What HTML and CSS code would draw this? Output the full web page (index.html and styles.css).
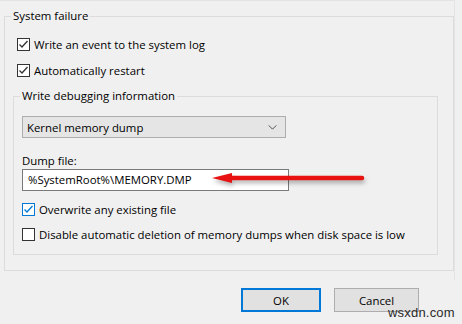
FILE: index.html
```html
<!DOCTYPE html>
<html>
<head>
<meta charset="utf-8">
<link rel="stylesheet" href="styles.css">
</head>
<body>
<div class="page">
  <div class="panel">
    <fieldset class="group outer">
      <legend>System failure</legend>
      <div class="check indent">
        <span class="box"><svg viewBox="0 0 13 13"><polyline points="2.5,6.5 5,9 10.5,3"/></svg></span>
        <span>Write an event to the system log</span>
      </div>
      <div class="check indent gap">
        <span class="box"><svg viewBox="0 0 13 13"><polyline points="2.5,6.5 5,9 10.5,3"/></svg></span>
        <span>Automatically restart</span>
      </div>
      <fieldset class="group inner">
        <legend>Write debugging information</legend>
        <div class="select">
          <span>Kernel memory dump</span>
          <svg class="chev" viewBox="0 0 10 6"><polyline points="0.5,0.5 5,5 9.5,0.5"/></svg>
        </div>
        <div class="field-label">Dump file:</div>
        <div class="textbox">%SystemRoot%\MEMORY.DMP</div>
        <div class="check row3">
          <span class="box blue"><svg viewBox="0 0 13 13"><polyline points="2.5,6.5 5,9 10.5,3"/></svg></span>
          <span>Overwrite any existing file</span>
        </div>
        <div class="check row4">
          <span class="box"></span>
          <span>Disable automatic deletion of memory dumps when disk space is low</span>
        </div>
      </fieldset>
    </fieldset>
  </div>
  <div class="buttons">
    <button class="btn default">OK</button>
    <button class="btn cancel">Cancel</button>
  </div>
  <svg class="arrow" viewBox="0 0 165 26" width="165" height="26">
    <line x1="24" y1="13" x2="157" y2="13"/>
    <polygon points="7,13 27,8 27,18"/>
  </svg>
  <div class="watermark">wsxdn.com</div>
</div>
</body>
</html>
```
FILE: styles.css
```css
html, body {
  margin: 0;
  padding: 0;
  background: #f0f0f0;
}
body {
  font-family: "Open Sans", "Noto Sans", sans-serif;
  font-size: 11.4px;
  color: #000;
  width: 462px;
  height: 324px;
  overflow: hidden;
}
.page {
  position: relative;
  width: 462px;
  height: 324px;
}
.panel {
  width: 455px;
  height: 280px;
  border-top: 1px solid #e4e4e4;
  border-right: 1px solid #e4e4e4;
  box-sizing: border-box;
}
.group {
  border: 1px solid #dcdcdc;
  margin: 0;
  min-width: 0;
}
.group legend {
  padding: 0 2px;
  margin-left: -2px;
  line-height: 16px;
  height: 16px;
}
.outer {
  margin: 7px 0 0 4px;
  width: 450px;
  box-sizing: border-box;
  padding: 14px 15px 15px 8px;
}
.inner {
  margin-top: 11px;
  width: 425px;
  box-sizing: border-box;
  padding: 12px 8px 13px 8px;
}
.check {
  display: flex;
  align-items: center;
  height: 13px;
  gap: 4px;
  white-space: nowrap;
}
.indent { margin-left: 4px; }
.gap { margin-top: 13px; }
.box {
  width: 13px;
  height: 13px;
  box-sizing: border-box;
  border: 1px solid #333;
  background: #fff;
  flex: none;
  display: block;
  position: relative;
}
.box svg {
  position: absolute;
  left: -1px;
  top: -1px;
  width: 13px;
  height: 13px;
  fill: none;
  stroke: #333;
  stroke-width: 1.3;
}
.box.blue { border-color: #0078d7; }
.box.blue svg { stroke: #0078d7; }
.select {
  width: 264px;
  height: 22px;
  box-sizing: border-box;
  border: 1px solid #adadad;
  background: #e5e5e5;
  display: flex;
  align-items: center;
  justify-content: space-between;
  padding: 0 4px 0 4px;
}
.chev {
  width: 9px;
  height: 5px;
  fill: none;
  stroke: #444;
  stroke-width: 1.1;
  margin-right: 4px;
}
.field-label {
  margin-top: 15px;
  height: 16px;
  line-height: 16px;
}
.textbox {
  width: 267px;
  height: 22px;
  box-sizing: border-box;
  border: 1px solid #7a7a7a;
  background: #fff;
  padding-left: 5px;
  line-height: 20px;
}
.row3 { margin-top: 12px; }
.row4 { margin-top: 12px; }
.buttons {
  display: flex;
  justify-content: flex-end;
  gap: 13px;
  padding-right: 43px;
  margin-top: 8px;
}
.btn {
  font: inherit;
  color: #000;
  height: 24px;
  box-sizing: border-box;
  background: #e1e1e1;
  border: 1px solid #adadad;
  padding: 0;
  border-radius: 0;
}
.btn.default {
  width: 80px;
  border: 2px solid #0078d7;
}
.btn.cancel {
  width: 85px;
}
.arrow {
  position: absolute;
  left: 205px;
  top: 165px;
  overflow: visible;
  filter: drop-shadow(1px 3px 2px rgba(0, 0, 0, 0.3));
}
.arrow line {
  stroke: #e81212;
  stroke-width: 4.5;
  stroke-linecap: round;
}
.arrow polygon {
  fill: #e81212;
}
.watermark {
  position: absolute;
  left: 388px;
  top: 305px;
  font-family: "Liberation Sans", Arial, sans-serif;
  font-size: 13px;
  color: #2a2a2a;
  letter-spacing: 0.2px;
}
```
